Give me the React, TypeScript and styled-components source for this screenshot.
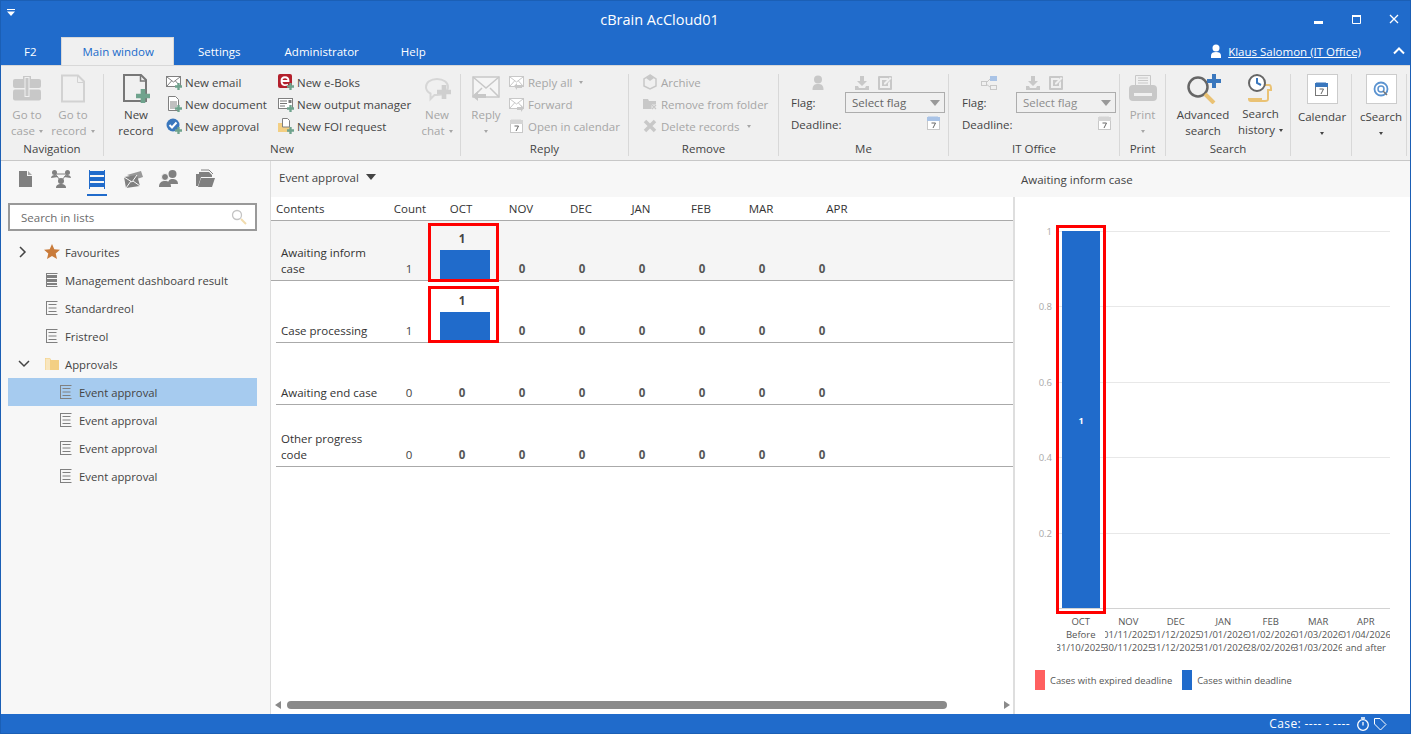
import React from 'react';
import styled, { createGlobalStyle } from 'styled-components';

const BLUE = '#206bcb';
const GREEN = '#6fa38d';
const OFF = '#c8c8c8';

const GlobalStyle = createGlobalStyle`
  html, body, #root { height: 100%; }
  body {
    margin: 0;
    font-family: "Open Sans", "Liberation Sans", sans-serif;
    font-size: 11.5px;
    color: #444;
    overflow: hidden;
  }
  * { box-sizing: border-box; }
`;

const Window = styled.div`
  border: 1px solid #1b5fb5;
  display: flex;
  flex-direction: column;
  height: 734px;
  overflow: hidden;
  width: 1411px;
`;

/* title bar */
const TitleBar = styled.div`
  align-items: center;
  background-color: ${BLUE};
  color: #fff;
  display: flex;
  flex: none;
  height: 36px;
`;

const QuickAccess = styled.div`
  align-self: flex-start;
  padding: 4px 0 0 5px;
  width: 92px;
`;

const Title = styled.div`
  flex: 1;
  font-size: 14.5px;
  padding-right: 86px;
  text-align: center;
`;

const WindowControls = styled.div`
  align-items: center;
  display: flex;
  gap: 26px;
  padding-right: 10px;
`;

const TabBar = styled.div`
  align-items: stretch;
  background-color: ${BLUE};
  display: flex;
  flex: none;
  height: 28px;
  padding-left: 1px;
`;

const Tab = styled.div<{ $active?: boolean; $after?: number }>`
  align-items: center;
  background-color: ${(p) => (p.$active ? '#f0f0f0' : 'transparent')};
  border: 1px solid ${(p) => (p.$active ? '#d8d8d8' : 'transparent')};
  border-bottom: 0;
  color: ${(p) => (p.$active ? BLUE : '#fff')};
  display: flex;
  margin-right: ${(p) => p.$after ?? 0}px;
  padding: 0 ${(p) => (p.$active ? 19 : 21)}px 0 21px;
`;

const UserBox = styled.div`
  align-items: center;
  color: #fff;
  display: flex;
  gap: 6px;
  margin-left: auto;
  padding-right: 5px;
`;

const UserLink = styled.a`
  color: #fff;
  text-decoration: underline;
  margin-right: 26px;
`;

/* ribbon */
const Ribbon = styled.div`
  background-color: #f0f0f0;
  border-bottom: 1px solid #c8c8c8;
  border-top: 1px solid #d8d8d8;
  display: flex;
  flex: none;
  height: 96px;
  padding-top: 8px;
`;

const Group = styled.div<{ $width: number }>`
  border-right: 1px solid #d8d8d8;
  display: flex;
  flex: none;
  flex-direction: column;
  height: 82px;
  width: ${(p) => p.$width}px;
`;

const GroupBody = styled.div<{ $pad?: number }>`
  display: flex;
  flex: none;
  height: 67px;
  padding-left: ${(p) => p.$pad ?? 0}px;
`;

const GroupLabel = styled.div`
  color: #444;
  line-height: 15px;
  text-align: center;
`;

const LargeButton = styled.div<{ $width: number; $off?: boolean }>`
  align-items: center;
  color: ${(p) => (p.$off ? '#a6a6a6' : '#444')};
  display: flex;
  flex: none;
  flex-direction: column;
  line-height: 16px;
  text-align: center;
  width: ${(p) => p.$width}px;
`;

const LargeIcon = styled.div<{ $height?: number }>`
  align-items: flex-start;
  display: flex;
  height: ${(p) => p.$height ?? 33}px;
  justify-content: center;
`;

const BoxedIcon = styled.div`
  align-items: center;
  background-color: #fff;
  border: 1px solid #ccc;
  display: flex;
  height: 31px;
  justify-content: center;
  margin-bottom: 5px;
  width: 31px;
`;

const Caret = styled.span<{ $off?: boolean; $alone?: boolean }>`
  border-left: 2.5px solid transparent;
  border-right: 2.5px solid transparent;
  border-top: 3px solid ${(p) => (p.$off ? '#a6a6a6' : '#444')};
  display: inline-block;
  margin-left: ${(p) => (p.$alone ? 0 : 4)}px;
  vertical-align: middle;
`;

const SmallColumn = styled.div<{ $width?: number; $gap?: number }>`
  display: flex;
  flex: none;
  flex-direction: column;
  margin-left: ${(p) => p.$gap ?? 0}px;
  margin-top: -3px;
  width: ${(p) => (p.$width ? `${p.$width}px` : 'auto')};
`;

const SmallItem = styled.div<{ $off?: boolean }>`
  align-items: center;
  color: ${(p) => (p.$off ? '#a6a6a6' : '#444')};
  display: flex;
  gap: 3px;
  height: 22px;
  white-space: nowrap;
`;

const FlagGrid = styled.div`
  align-items: center;
  display: grid;
  grid-template-columns: 54px 100px;
  grid-template-rows: 18px 21px 22px;
`;

const FlagLabel = styled.div`
  color: #444;
`;

const FlagIcons = styled.div<{ $end?: boolean }>`
  align-items: center;
  display: flex;
  gap: 7px;
  justify-content: ${(p) => (p.$end ? 'flex-end' : 'flex-start')};
  padding: ${(p) => (p.$end ? '0 3px 2px 0' : '0 0 0 9px')};
`;

const UserSlot = styled.div`
  display: flex;
  justify-content: center;
`;

const FlagSelect = styled.div<{ $off?: boolean }>`
  align-items: center;
  border: 1px solid #adadad;
  color: ${(p) => (p.$off ? '#8c8c8c' : '#666')};
  display: flex;
  height: 21px;
  justify-content: space-between;
  padding: 0 4px 0 6px;
`;

const SelectArrow = styled.span`
  border-left: 5px solid transparent;
  border-right: 5px solid transparent;
  border-top: 6px solid #999;
`;

/* main */
const Main = styled.div`
  display: flex;
  flex: 1;
  min-height: 0;
`;

const Sidebar = styled.div`
  background-color: #f7f7f7;
  border-right: 1px solid #dcdcdc;
  flex: none;
  padding: 0 13px 0 7px;
  width: 270px;
`;

const SideTabs = styled.div`
  display: flex;
  gap: 16px;
  height: 42px;
  padding: 8px 0 0 7px;
`;

const SideTab = styled.div<{ $active?: boolean }>`
  border-bottom: 2px solid ${(p) => (p.$active ? BLUE : 'transparent')};
  height: 27px;
  width: 20px;
`;

const SearchBox = styled.div`
  align-items: center;
  background-color: #fff;
  border: 2px solid #999;
  display: flex;
  height: 28px;
  margin-bottom: 7px;
  padding: 0 8px 0 11px;
`;

const SearchInput = styled.input`
  border: 0;
  color: #666;
  flex: 1;
  font: inherit;
  min-width: 0;
  outline: 0;
  padding: 0;

  &::placeholder {
    color: #6c6c6c;
    opacity: 1;
  }
`;

const TreeRow = styled.div<{ $level: number; $selected?: boolean }>`
  align-items: center;
  background-color: ${(p) => (p.$selected ? '#a6cbef' : 'transparent')};
  color: #444;
  display: flex;
  font-size: 11.3px;
  height: 28px;
  padding-left: ${(p) => (p.$level ? 24 : 10)}px;
`;

const Expander = styled.div`
  align-items: center;
  display: flex;
  flex: none;
  width: 26px;
`;

const TreeIcon = styled.div`
  display: flex;
  flex: none;
  margin-right: 5px;
  width: 16px;
`;

const Center = styled.div`
  background-color: #fff;
  display: flex;
  flex: none;
  flex-direction: column;
  width: 742px;
`;

const PanelHeader = styled.div`
  align-items: center;
  background-color: #f7f7f7;
  display: flex;
  flex: none;
  gap: 7px;
  height: 36px;
  padding: 0 0 4px 8px;
`;

const HeaderArrow = styled.span`
  border-left: 5px solid transparent;
  border-right: 5px solid transparent;
  border-top: 6px solid #444;
`;

const Table = styled.div`
  flex: 1;
`;

const columns = '110px 46px repeat(7, 60px)';

const TableHead = styled.div`
  align-items: center;
  border-bottom: 1px solid #aaa;
  color: #333;
  display: grid;
  grid-template-columns: ${columns};
  height: 24px;
  padding-left: 5px;
`;

const HeadCell = styled.div<{ $shift?: number }>`
  left: ${(p) => p.$shift ?? 0}px;
  position: relative;
  text-align: center;
`;

const HeadFirst = styled.div`
  text-align: left;
`;

const Row = styled.div<{ $selected?: boolean }>`
  align-items: end;
  background-color: ${(p) => (p.$selected ? '#f5f5f5' : 'transparent')};
  border-bottom: 1px solid #aaa;
  display: grid;
  grid-template-columns: ${columns};
  height: 60px;
  margin: 0 0 2px ${(p) => (p.$selected ? 0 : 5)}px;
  padding-left: ${(p) => (p.$selected ? 5 : 0)}px;
`;

const RowName = styled.div`
  color: #333;
  line-height: 16px;
  padding: 0 0 3px 5px;
`;

const CountCell = styled.div`
  line-height: 16px;
  padding-bottom: 3px;
  text-align: center;
`;

const ZeroCell = styled.div`
  color: #555;
  font-weight: 700;
  line-height: 16px;
  padding-bottom: 3px;
  text-align: center;
`;

const BarCell = styled.div`
  align-self: stretch;
  color: #444;
  display: flex;
  flex-direction: column;
  font-weight: 700;
  justify-content: flex-end;
  line-height: 16px;
  position: relative;
  text-align: center;
`;

const BarValue = styled.div`
  margin-bottom: 3px;
`;

const Bar = styled.div`
  background-color: ${BLUE};
  height: 30px;
  margin-left: 8px;
  width: 50px;
`;

const RedFrame = styled.div<{ $top: number; $bottom: number }>`
  border: 3px solid #f00;
  bottom: ${(p) => p.$bottom}px;
  left: -4px;
  position: absolute;
  right: -7px;
  top: ${(p) => p.$top}px;
`;

const HScroll = styled.div`
  align-items: center;
  display: flex;
  flex: none;
  gap: 6px;
  height: 12px;
  margin-bottom: 3px;
  padding: 0 3px 0 4px;
`;

const ScrollThumb = styled.div`
  background-color: #8a8a8a;
  border-radius: 4px;
  height: 8px;
  width: 660px;
`;

const ScrollLeft = styled.span`
  border-bottom: 4px solid transparent;
  border-right: 6px solid #8a8a8a;
  border-top: 4px solid transparent;
`;

const ScrollRight = styled.span`
  border-bottom: 4px solid transparent;
  border-left: 6px solid #8a8a8a;
  border-top: 4px solid transparent;
  margin-left: auto;
`;

const Aside = styled.div`
  background-color: #fff;
  border-left: 2px solid #dedede;
  display: flex;
  flex: 1;
  flex-direction: column;
  min-width: 0;
`;

const AsideTitle = styled.div`
  align-items: center;
  background-color: #f7f7f7;
  display: flex;
  height: 36px;
  margin-left: -2px;
  padding-left: 8px;
`;

const ChartSvg = styled.svg`
  display: block;
  flex: none;
  margin: 18px 0 0 2px;
`;

const AxisRow = styled.div`
  display: flex;
  padding-left: 42px;
`;

const AxisCol = styled.div`
  align-items: center;
  color: #555;
  display: flex;
  flex: none;
  flex-direction: column;
  font-size: 9.5px;
  line-height: 13px;
  overflow: hidden;
  white-space: nowrap;
  width: 47.5px;
`;

const Legend = styled.div`
  align-items: center;
  display: flex;
  font-size: 9.4px;
  padding: 16px 0 0 20px;
`;

const Swatch = styled.span<{ $color: string }>`
  background-color: ${(p) => p.$color};
  height: 20px;
  margin-right: 5px;
  width: 10px;
`;

const LegendText = styled.span`
  color: #555;
  margin-right: 10px;
`;

const StatusBar = styled.div`
  align-items: center;
  background-color: ${BLUE};
  color: #fff;
  display: flex;
  flex: none;
  gap: 3px;
  height: 19px;
  justify-content: flex-end;
  padding-right: 23px;
`;

const StatusText = styled.span`
  font-size: 12px;
  letter-spacing: 0.4px;
  margin-right: 3px;
`;

/* icons */
type IconProps = { c?: string };

const Plus = ({ x = 9, y = 9, s = 7, c = GREEN }: { x?: number; y?: number; s?: number; c?: string }) => (
  <path
    d={`M${x + s / 3} ${y}h${s / 3}v${s / 3}h${s / 3}v${s / 3}h${-s / 3}v${s / 3}h${-s / 3}v${-s / 3}h${-s / 3}v${-s / 3}h${s / 3}z`}
    fill={c}
  />
);

const Svg: React.FC<{ size?: number; children: React.ReactNode }> = ({ size = 16, children }) => (
  <svg width={size} height={size} viewBox={`0 0 ${size} ${size}`}>{children}</svg>
);

const Envelope = ({ c = '#808080' }: IconProps) => (
  <>
    <rect x="0.5" y="2.5" width="14" height="10" fill="#fff" stroke={c} />
    <path d="M1 3l6.5 5 6.5-5M1 12l4.5-5M14 12l-4.5-5" fill="none" stroke={c} />
  </>
);

const DocSmall = ({ c = '#808080' }: IconProps) => (
  <>
    <path d="M2.5 .5h7l3 3v11h-10z" fill="#fff" stroke={c} />
    <path d="M4 6h7M4 8h7M4 10h7M4 12h5" stroke={c} />
  </>
);

const Calendar = ({ c = '#8a8a8a', top = '#6f9fd8' }: { c?: string; top?: string }) => (
  <>
    <rect x="1.5" y="3.5" width="12" height="11" fill="#fff" stroke={c} />
    <rect x="1" y="2" width="13" height="4" fill={top} />
    <path d="M3 1v2M5 1v2M7 1v2M9 1v2M11 1v2" stroke={top} />
    <path d="M5.5 8h4l-2.5 5" fill="none" stroke="#666" />
  </>
);

const ListIcon = ({ filled }: { filled?: boolean }) => (
  <Svg>
    <path d="M2.5 1.5h11M2.5 14.5h11M2.5 1v14" fill="none" stroke="#808080" />
    {filled ? (
      <path d="M3 3h10v3H3zM3 7h10v3H3zM3 11h10v2H3z" fill="#808080" />
    ) : (
      <path d="M4.5 4.5h8M4.5 8h8M4.5 11.5h8" stroke="#808080" />
    )}
  </Svg>
);

const Download = () => (
  <Svg>
    <path d="M6 1h4v5h3l-5 5-5-5h3z" fill={OFF} />
    <path d="M1 11h3l1 2h6l1-2h3v4H1z" fill={OFF} />
  </Svg>
);

const EditFlag = () => (
  <Svg>
    <rect x="1" y="1" width="14" height="14" rx="1" fill={OFF} />
    <path d="M3 3h8v2H5v6h6V8l2-2v7H3z" fill="#f0f0f0" />
    <path d="M7 8l6-6 1.5 1.5-6 6H7z" fill="#f0f0f0" />
  </Svg>
);

const FlagPerson = () => (
  <Svg>
    <circle cx="8" cy="4.5" r="4" fill={OFF} />
    <path d="M2.5 15c0-5 2-6 5.5-6s5.5 1 5.5 6z" fill={OFF} />
  </Svg>
);

const FlagOffice = () => (
  <svg width="18" height="16" viewBox="0 0 18 16">
    <rect x="1.5" y="6.5" width="5" height="4" fill="none" stroke={OFF} />
    <rect x="10" y="1" width="7" height="5" fill="#a9c3e6" />
    <rect x="10.5" y="10.5" width="6" height="4" fill="none" stroke={OFF} />
    <path d="M6 8l4-4M6 9l4 3" stroke={OFF} />
  </svg>
);

const Caption = ({ children, off, caret }: { children: React.ReactNode; off?: boolean; caret?: boolean }) => (
  <div>
    {children}
    {caret ? <Caret $off={off} /> : null}
  </div>
);

const months = ['OCT', 'NOV', 'DEC', 'JAN', 'FEB', 'MAR', 'APR'];

const axis = [
  ['OCT', 'Before', '31/10/2025'],
  ['NOV', '01/11/2025', '30/11/2025'],
  ['DEC', '01/12/2025', '31/12/2025'],
  ['JAN', '01/01/2026', '31/01/2026'],
  ['FEB', '01/02/2026', '28/02/2026'],
  ['MAR', '01/03/2026', '31/03/2026'],
  ['APR', '01/04/2026', 'and after'],
];

const rows = [
  { name: 'Awaiting inform case', count: 1, selected: true, frame: [2, -2] },
  { name: 'Case processing', count: 1, frame: [3, -1] },
  { name: 'Awaiting end case', count: 0 },
  { name: 'Other progress code', count: 0 },
];

const ticks = [
  { label: '1', y: 16 },
  { label: '0.8', y: 91 },
  { label: '0.6', y: 167 },
  { label: '0.4', y: 242 },
  { label: '0.2', y: 318 },
];

const FlagBlock = ({ person, off }: { person: React.ReactNode; off?: boolean }) => (
  <FlagGrid>
    <UserSlot>{person}</UserSlot>
    <FlagIcons>
      <Download />
      <EditFlag />
    </FlagIcons>
    <FlagLabel>Flag:</FlagLabel>
    <FlagSelect $off={off}>
      Select flag
      <SelectArrow />
    </FlagSelect>
    <FlagLabel>Deadline:</FlagLabel>
    <FlagIcons $end>
      <Svg><Calendar c={OFF} top={off ? '#d5d5d5' : '#a9c3e6'} /></Svg>
    </FlagIcons>
  </FlagGrid>
);

const App: React.FC = () => (
  <>
    <GlobalStyle />
    <Window>
      <TitleBar>
        <QuickAccess>
          <svg width="10" height="8" viewBox="0 0 10 8">
            <path d="M1 0h8v1H1zM1 2.5h8L5 7z" fill="#fff" />
          </svg>
        </QuickAccess>
        <Title>cBrain AcCloud01</Title>
        <WindowControls>
          <svg width="12" height="12" viewBox="0 0 12 12"><rect x="2" y="8" width="9" height="3" fill="#fff" /></svg>
          <svg width="12" height="12" viewBox="0 0 12 12"><path d="M2.5 3.5h8v7h-8z" fill="none" stroke="#fff" /><rect x="2" y="2" width="9" height="2" fill="#fff" /></svg>
          <svg width="12" height="12" viewBox="0 0 12 12"><path d="M2 2l8 8M10 2l-8 8" stroke="#fff" strokeWidth="1.3" /></svg>
        </WindowControls>
      </TitleBar>
      <TabBar>
        <Tab $after={2}>F2</Tab>
        <Tab $active $after={2}>Main window</Tab>
        <Tab>Settings</Tab>
        <Tab $after={-2}>Administrator</Tab>
        <Tab>Help</Tab>
        <UserBox>
          <svg width="12" height="14" viewBox="0 0 12 14">
            <circle cx="6" cy="4" r="3.5" fill="#fff" />
            <path d="M1 14v-2.5C1 9 3 8 6 8s5 1 5 3.5V14z" fill="#fff" />
          </svg>
          <UserLink>Klaus Salomon (IT Office)</UserLink>
          <svg width="12" height="8" viewBox="0 0 12 8">
            <path d="M1 6.5l5-5 5 5" fill="none" stroke="#fff" strokeWidth="2" />
          </svg>
        </UserBox>
      </TabBar>

      <Ribbon>
        <Group $width={103}>
          <GroupBody $pad={3}>
            <LargeButton $width={46} $off>
              <LargeIcon>
                <Svg size={30}>
                  <path d="M11 5V2h8v3h-2V4h-4v1z" fill={OFF} />
                  <rect x="1" y="5" width="28" height="9" rx="2" fill={OFF} />
                  <rect x="1" y="15.5" width="28" height="11" rx="2" fill={OFF} />
                  <rect x="12.5" y="3" width="5" height="20" fill="#f0f0f0" />
                  <rect x="13.5" y="4" width="3" height="18" fill={OFF} />
                </Svg>
              </LargeIcon>
              <Caption off>Go to</Caption>
              <Caption off caret>case</Caption>
            </LargeButton>
            <LargeButton $width={46} $off>
              <LargeIcon>
                <Svg size={30}>
                  <path d="M4 1.5h16l6 6v20H4z" fill="none" stroke="#d2d2d2" strokeWidth="2" />
                  <path d="M19.5 2v6.5H26" fill="none" stroke="#d2d2d2" />
                </Svg>
              </LargeIcon>
              <Caption off>Go to</Caption>
              <Caption off caret>record</Caption>
            </LargeButton>
          </GroupBody>
          <GroupLabel>Navigation</GroupLabel>
        </Group>

        <Group $width={357}>
          <GroupBody $pad={10}>
            <LargeButton $width={44}>
              <LargeIcon>
                <Svg size={30}>
                  <path d="M3 1h17l5 5v21H3z" fill="none" stroke="#777" strokeWidth="2" />
                  <path d="M19.5 1v6H25" fill="none" stroke="#777" strokeWidth="1.5" />
                  <Plus x={15} y={15} s={14} />
                </Svg>
              </LargeIcon>
              <Caption>New</Caption>
              <Caption>record</Caption>
            </LargeButton>
            <SmallColumn $width={112} $gap={8}>
              <SmallItem><Svg><Envelope /><Plus /></Svg>New email</SmallItem>
              <SmallItem><Svg><DocSmall /><Plus /></Svg>New document</SmallItem>
              <SmallItem>
                <Svg>
                  <circle cx="7" cy="7" r="6.5" fill="#3a77bd" />
                  <path d="M3.5 7l2.5 2.5L10.5 4.5" fill="none" stroke="#fff" strokeWidth="2" />
                  <Plus />
                </Svg>
                New approval
              </SmallItem>
            </SmallColumn>
            <SmallColumn $width={137}>
              <SmallItem>
                <Svg>
                  <rect x="0" y="0" width="14" height="14" rx="2" fill="#b3202c" />
                  <path d="M3.5 7h7c0-5-7-5-7 0s4 4.5 6.5 3.5" fill="none" stroke="#fff" strokeWidth="1.8" />
                  <Plus />
                </Svg>
                New e-Boks
              </SmallItem>
              <SmallItem>
                <Svg>
                  <rect x=".5" y="2.5" width="14" height="10" fill="#fff" stroke="#808080" />
                  <path d="M2 5h7M2 7.5h7M2 10h5" stroke="#777" />
                  <rect x="10.5" y="4" width="3" height="3" fill="#777" />
                  <Plus />
                </Svg>
                New output manager
              </SmallItem>
              <SmallItem>
                <Svg>
                  <path d="M0 5h4l1-1h7v10H0z" fill="#f3cf83" />
                  <path d="M4.5 .5h5l2 2V9h-7z" fill="#fff" stroke="#808080" />
                  <Plus />
                </Svg>
                New FOI request
              </SmallItem>
            </SmallColumn>
            <LargeButton $width={44} $off>
              <LargeIcon>
                <Svg size={30}>
                  <path d="M15 5c6.5 0 11 3.5 11 8s-4.5 8-11 8c-1 0-1.5 0-2.500 0l-4 4v-5.500C5.500 18 4 15.500 4 13c0-4.500 4.500-8 11-8z" fill="none" stroke="#d6d6d6" strokeWidth="2" />
                  <Plus x={15} y={11} s={14} c="#cfcfcf" />
                </Svg>
              </LargeIcon>
              <Caption off>New</Caption>
              <Caption off caret>chat</Caption>
            </LargeButton>
          </GroupBody>
          <GroupLabel>New</GroupLabel>
        </Group>

        <Group $width={168}>
          <GroupBody $pad={5}>
            <LargeButton $width={40} $off>
              <LargeIcon>
                <Svg size={30}>
                  <rect x="2" y="3" width="26" height="20" fill="#f5f5f5" stroke={OFF} strokeWidth="1.5" />
                  <path d="M2 3l13 11L28 3M2 23l9-9M28 23l-9-9" fill="none" stroke={OFF} strokeWidth="1.5" />
                  <path d="M1 22l6-5v3h8v4H7v3z" fill={OFF} />
                </Svg>
              </LargeIcon>
              <Caption off>Reply</Caption>
              <div><Caret $off $alone /></div>
            </LargeButton>
            <SmallColumn $gap={3}>
              <SmallItem $off>
                <Svg><Envelope c={OFF} /><path d="M5 12l3-3v2h5v3H8v2z" fill={OFF} /></Svg>
                Reply all<Caret $off />
              </SmallItem>
              <SmallItem $off>
                <Svg><Envelope c={OFF} /><path d="M15 12l-3-3v2H8v3h4v2z" fill={OFF} /></Svg>
                Forward
              </SmallItem>
              <SmallItem $off><Svg><Calendar c={OFF} top="#d5d5d5" /></Svg>Open in calendar</SmallItem>
            </SmallColumn>
          </GroupBody>
          <GroupLabel>Reply</GroupLabel>
        </Group>

        <Group $width={150}>
          <GroupBody $pad={13}>
            <SmallColumn>
              <SmallItem $off>
                <Svg>
                  <path d="M8 1L2 5v7l6 3 6-3V5z" fill="none" stroke={OFF} strokeWidth="1.5" />
                  <path d="M4 4l4-3 4 3-4 3z" fill={OFF} />
                </Svg>
                Archive
              </SmallItem>
              <SmallItem $off>
                <Svg>
                  <path d="M1 3h5l1 2h7v8H1z" fill={OFF} />
                  <path d="M10 9l4 4M14 9l-4 4" stroke="#f0f0f0" strokeWidth="2.5" />
                  <path d="M10 9l4 4M14 9l-4 4" stroke={OFF} strokeWidth="1.3" />
                </Svg>
                Remove from folder
              </SmallItem>
              <SmallItem $off>
                <Svg><path d="M3 3l10 10M13 3L3 13" stroke={OFF} strokeWidth="3.5" /></Svg>
                Delete records<Caret $off />
              </SmallItem>
            </SmallColumn>
          </GroupBody>
          <GroupLabel>Remove</GroupLabel>
        </Group>

        <Group $width={170}>
          <GroupBody $pad={12}>
            <FlagBlock person={<FlagPerson />} />
          </GroupBody>
          <GroupLabel>Me</GroupLabel>
        </Group>

        <Group $width={171}>
          <GroupBody $pad={13}>
            <FlagBlock person={<FlagOffice />} off />
          </GroupBody>
          <GroupLabel>IT Office</GroupLabel>
        </Group>

        <Group $width={46}>
          <GroupBody>
            <LargeButton $width={45} $off>
              <LargeIcon>
                <Svg size={30}>
                  <path d="M7.5 1.5h15v11h-15z" fill="none" stroke={OFF} />
                  <path d="M10 4h10M10 6.5h10M10 9h10" stroke={OFF} />
                  <rect x="1" y="11" width="28" height="16" rx="4" fill={OFF} />
                  <rect x="6" y="19" width="18" height="3" fill="#f0f0f0" />
                </Svg>
              </LargeIcon>
              <Caption off>Print</Caption>
              <div><Caret $off $alone /></div>
            </LargeButton>
          </GroupBody>
          <GroupLabel>Print</GroupLabel>
        </Group>

        <Group $width={125}>
          <GroupBody $pad={7}>
            <LargeButton $width={60}>
              <LargeIcon>
                <svg width="36" height="32" viewBox="0 0 36 32" style={{ marginTop: -2 }}>
                  <circle cx="13" cy="15" r="9.5" fill="none" stroke="#666" strokeWidth="2.5" />
                  <path d="M20 22l9 9" stroke="#eac274" strokeWidth="4" />
                  <path d="M22 7h5V2h4v5h5v4h-5v5h-4v-5h-5z" fill="#3a77bd" />
                </svg>
              </LargeIcon>
              <Caption>Advanced</Caption>
              <Caption>search</Caption>
            </LargeButton>
            <LargeButton $width={55}>
              <LargeIcon $height={32}>
                <svg width="30" height="32" viewBox="0 0 30 32" style={{ marginTop: -1 }}>
                  <path d="M17 12h6c2 0 2 2 2 3v2h-3v9c0 2-1 2-3 2H5c-2 0-2-2-2-2h13" fill="none" stroke="#eac274" strokeWidth="2" />
                  <circle cx="11" cy="10" r="8" fill="#fff" stroke="#666" strokeWidth="2" />
                  <path d="M11 5v5l4 2" fill="none" stroke="#3a77bd" strokeWidth="2" />
                </svg>
              </LargeIcon>
              <Caption>Search</Caption>
              <Caption caret>history</Caption>
            </LargeButton>
          </GroupBody>
          <GroupLabel>Search</GroupLabel>
        </Group>

        <Group $width={61}>
          <GroupBody $pad={2}>
            <LargeButton $width={58}>
              <BoxedIcon>
                <Svg><Calendar c="#777" top="#3a77bd" /></Svg>
              </BoxedIcon>
              <Caption>Calendar</Caption>
              <div><Caret $alone /></div>
            </LargeButton>
          </GroupBody>
        </Group>

        <Group $width={55}>
          <GroupBody>
            <LargeButton $width={58}>
              <BoxedIcon>
                <Svg>
                  <circle cx="8" cy="8" r="6.5" fill="none" stroke="#5b93d0" strokeWidth="1.8" />
                  <circle cx="8" cy="8" r="3" fill="none" stroke="#5b93d0" strokeWidth="1.5" />
                  <path d="M10 10l4 4" stroke="#777" strokeWidth="1.5" />
                </Svg>
              </BoxedIcon>
              <Caption>cSearch</Caption>
              <div><Caret $alone /></div>
            </LargeButton>
          </GroupBody>
        </Group>
      </Ribbon>

      <Main>
        <Sidebar>
          <SideTabs>
            <SideTab>
              <Svg size={20}><path d="M4 2h8v5h5v11H4z" fill="#808080" /><path d="M13 2l4 4h-4z" fill="#aaa" /></Svg>
            </SideTab>
            <SideTab>
              <Svg size={20}>
                <path d="M4 5h12M4 5l6 7M16 5l-6 7" stroke="#808080" fill="none" />
                <circle cx="3.5" cy="3.5" r="2.5" fill="#808080" />
                <circle cx="16.5" cy="3.5" r="2.5" fill="#808080" />
                <path d="M0 9c0-2 2-3 3.500-3S7 7 7 8zM13 8c0-1 2-2 3.500-2s3.500 1 3.500 3z" fill="#808080" />
                <circle cx="10" cy="12" r="3" fill="#808080" />
                <path d="M5 19c0-3 2-4 5-4s5 1 5 4z" fill="#808080" />
              </Svg>
            </SideTab>
            <SideTab $active>
              <Svg size={20}>
                <path d="M2.5 1v19M17.5 1v19" stroke={BLUE} />
                <path d="M3 2h14v4H3zM3 8h14v4H3zM3 14h14v4H3z" fill={BLUE} />
              </Svg>
            </SideTab>
            <SideTab>
              <Svg size={20}>
                <path d="M4 6l14-4 2 6-6 2z" fill="#999" />
                <path d="M1 8l13-2 3 11-14 2z" fill="#808080" />
                <path d="M1 8l8 5 5-7M3 19l5-7M17 17l-7-5" fill="none" stroke="#f7f7f7" />
              </Svg>
            </SideTab>
            <SideTab>
              <Svg size={20}>
                <circle cx="13.5" cy="5" r="4" fill="#808080" />
                <path d="M9 15c0-4 2-5 4.500-5s5.500 1 5.500 5z" fill="#808080" />
                <circle cx="6" cy="8" r="3.500" fill="#808080" stroke="#f7f7f7" />
                <path d="M0 18c0-5 3-6 6-6s6 1 6 6z" fill="#808080" />
              </Svg>
            </SideTab>
            <SideTab>
              <Svg size={20}>
                <path d="M1 5h3V3h10l3 3v2H6L3 17H1z" fill="#808080" />
                <path d="M6 9h14l-3 9H3z" fill="#808080" />
                <path d="M6 1h8l4 4" fill="none" stroke="#808080" />
              </Svg>
            </SideTab>
          </SideTabs>
          <SearchBox>
            <SearchInput placeholder="Search in lists" readOnly />
            <Svg>
              <circle cx="6" cy="6" r="4.5" fill="none" stroke="#c4c4c4" strokeWidth="1.3" />
              <path d="M10 10l5 5" stroke="#f1dcae" strokeWidth="2" />
            </Svg>
          </SearchBox>
          <TreeRow $level={0}>
            <Expander>
              <svg width="10" height="12" viewBox="0 0 10 12"><path d="M2 1l5 5-5 5" fill="none" stroke="#444" strokeWidth="1.5" /></svg>
            </Expander>
            <TreeIcon>
              <Svg><path d="M8 0l2.300 5.200 5.700.6-4.300 3.700 1.300 5.600L8 12.100l-5 3 1.300-5.600L0 5.800l5.700-.6z" fill="#c97b3a" /></Svg>
            </TreeIcon>
            Favourites
          </TreeRow>
          <TreeRow $level={0}><Expander /><TreeIcon><ListIcon filled /></TreeIcon>Management dashboard result</TreeRow>
          <TreeRow $level={0}><Expander /><TreeIcon><ListIcon /></TreeIcon>Standardreol</TreeRow>
          <TreeRow $level={0}><Expander /><TreeIcon><ListIcon /></TreeIcon>Fristreol</TreeRow>
          <TreeRow $level={0}>
            <Expander>
              <svg width="12" height="10" viewBox="0 0 12 10"><path d="M1 2l5 5 5-5" fill="none" stroke="#444" strokeWidth="1.5" /></svg>
            </Expander>
            <TreeIcon>
              <Svg><path d="M1 2h5l1 2h8v10H1z" fill="#f3cf83" /><path d="M1.5 2.5h4.500v11.500h-4.500z" fill="#f8e6bf" /></Svg>
            </TreeIcon>
            Approvals
          </TreeRow>
          <TreeRow $level={1} $selected><Expander /><TreeIcon><ListIcon /></TreeIcon>Event approval</TreeRow>
          <TreeRow $level={1}><Expander /><TreeIcon><ListIcon /></TreeIcon>Event approval</TreeRow>
          <TreeRow $level={1}><Expander /><TreeIcon><ListIcon /></TreeIcon>Event approval</TreeRow>
          <TreeRow $level={1}><Expander /><TreeIcon><ListIcon /></TreeIcon>Event approval</TreeRow>
        </Sidebar>

        <Center>
          <PanelHeader>
            Event approval
            <HeaderArrow />
          </PanelHeader>
          <Table>
            <TableHead>
              <HeadFirst>Contents</HeadFirst>
              <HeadCell $shift={1}>Count</HeadCell>
              {months.map((m, i) => (
                <HeadCell key={m} $shift={i === 6 ? 15 : -1}>{m}</HeadCell>
              ))}
            </TableHead>
            {rows.map((row) => (
              <Row key={row.name} $selected={row.selected}>
                <RowName>{row.name}</RowName>
                <CountCell>{row.count}</CountCell>
                {months.map((m, i) =>
                  i === 0 && row.frame ? (
                    <BarCell key={m}>
                      <BarValue>1</BarValue>
                      <Bar />
                      <RedFrame $top={row.frame[0]} $bottom={row.frame[1]} />
                    </BarCell>
                  ) : (
                    <ZeroCell key={m}>0</ZeroCell>
                  ),
                )}
              </Row>
            ))}
          </Table>
          <HScroll>
            <ScrollLeft />
            <ScrollThumb />
            <ScrollRight />
          </HScroll>
        </Center>

        <Aside>
          <AsideTitle>Awaiting inform case</AsideTitle>
          <ChartSvg width="373" height="400" viewBox="0 0 373 400">
            {ticks.map((t) => (
              <g key={t.label}>
                <line x1="40" x2="373" y1={t.y + 0.5} y2={t.y + 0.5} stroke="#e8e8e8" />
                <text x="35" y={t.y + 4} fontSize="9.5" fill="#aaa" textAnchor="end" fontFamily="Open Sans">{t.label}</text>
              </g>
            ))}
            <line x1="40" x2="373" y1="393.5" y2="393.5" stroke="#d2d2d2" />
            <rect x="45" y="16" width="38" height="377" fill={BLUE} />
            <text x="64" y="209" fontSize="9" fontWeight="700" fill="#fff" textAnchor="middle" fontFamily="Open Sans">1</text>
            <rect x="40.5" y="11.5" width="47" height="386" fill="none" stroke="#f00" strokeWidth="3" />
          </ChartSvg>
          <AxisRow>
            {axis.map((lines) => (
              <AxisCol key={lines[0]}>
                {lines.map((l) => <div key={l}>{l}</div>)}
              </AxisCol>
            ))}
          </AxisRow>
          <Legend>
            <Swatch $color="#ff6060" />
            <LegendText>Cases with expired deadline</LegendText>
            <Swatch $color={BLUE} />
            <LegendText>Cases within deadline</LegendText>
          </Legend>
        </Aside>
      </Main>

      <StatusBar>
        <StatusText>Case: ---- - ----</StatusText>
        <Svg size={14}>
          <circle cx="7" cy="8" r="5.3" fill="none" stroke="#fff" strokeWidth="1.3" />
          <path d="M5 1h4M7 5v3.5" stroke="#fff" strokeWidth="1.3" />
        </Svg>
        <Svg size={14}>
          <path d="M1.5 1.5h5.5l6 6-5.500 5.500-6-6z" fill="none" stroke="#fff" />
        </Svg>
      </StatusBar>
    </Window>
  </>
);

export default App;
